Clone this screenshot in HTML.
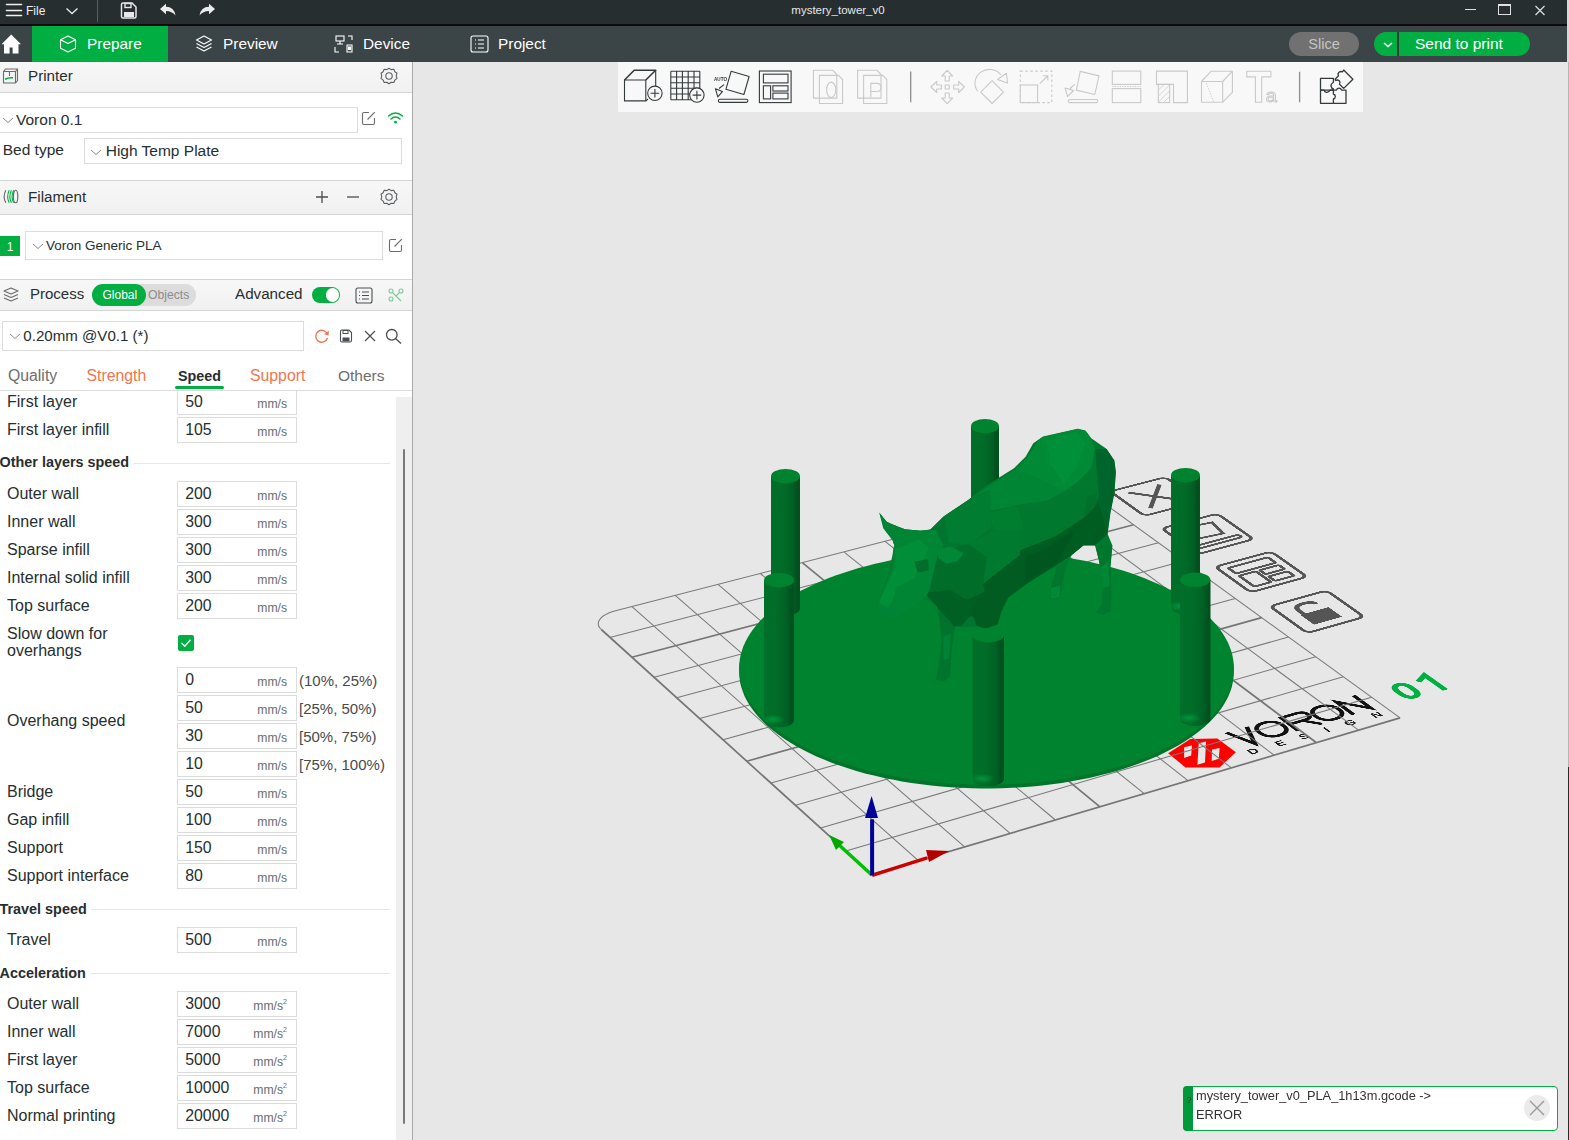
<!DOCTYPE html><html><head><meta charset="utf-8"><style>
html,body{margin:0;padding:0}
body{width:1569px;height:1140px;overflow:hidden;position:relative;background:#e7e7e7;font-family:"Liberation Sans",sans-serif}
.t{position:absolute;white-space:nowrap}
svg{overflow:visible}
</style></head><body><div style="position:absolute;left:413px;top:62px;width:1155px;height:1078px;background:#e7e7e7"></div><div style="position:absolute;left:0;top:0;width:1600px;height:1400px;transform-origin:0 0;transform:matrix3d(0.465738548,-0.08258816499,0,4.887388308e-05,0.1668468893,0.1443035326,0,-7.871619938e-05,0,0,1,0,523.377298,609.8387866,0,1)"><svg width="1600" height="1400" viewBox="0 0 1600 1400"><path d="M969.0 1176.0 L993.0 1242.0 L1017.0 1176.0" fill="none" stroke="#111" stroke-width="9.5" stroke-linejoin="miter"/><rect x="1026.0" y="1180.0" width="56.0" height="58.0" rx="26" ry="26" fill="none" stroke="#111" stroke-width="9.5" stroke-linejoin="miter"/><path d="M1096.0 1242.0 L1096.0 1180.0 L1132.0 1180.0 Q1150.0 1180.0 1150.0 1195.0 Q1150.0 1211.0 1132.0 1211.0 L1096.0 1211.0 M1126.0 1211.0 L1152.0 1242.0" fill="none" stroke="#111" stroke-width="9.5" stroke-linejoin="miter"/><rect x="1159.0" y="1180.0" width="56.0" height="58.0" rx="26" ry="26" fill="none" stroke="#111" stroke-width="9.5" stroke-linejoin="miter"/><path d="M1228.0 1242.0 L1228.0 1180.0 L1273.0 1238.0 L1273.0 1176.0" fill="none" stroke="#111" stroke-width="9.5" stroke-linejoin="miter"/><text x="973.0" y="1276.0" text-anchor="middle" font-family="Liberation Sans" font-size="30" font-weight="700" fill="#1a1a1a">D</text><text x="1037.0" y="1276.0" text-anchor="middle" font-family="Liberation Sans" font-size="30" font-weight="700" fill="#1a1a1a">E</text><text x="1093.0" y="1276.0" text-anchor="middle" font-family="Liberation Sans" font-size="30" font-weight="700" fill="#1a1a1a">S</text><text x="1147.0" y="1276.0" text-anchor="middle" font-family="Liberation Sans" font-size="30" font-weight="700" fill="#1a1a1a">I</text><text x="1203.0" y="1276.0" text-anchor="middle" font-family="Liberation Sans" font-size="30" font-weight="700" fill="#1a1a1a">G</text><text x="1267.0" y="1276.0" text-anchor="middle" font-family="Liberation Sans" font-size="30" font-weight="700" fill="#1a1a1a">N</text><rect x="1359.0" y="1184.0" width="33.0" height="58.0" rx="16" ry="22" fill="none" stroke="#00b043" stroke-width="13"/><path d="M1419.0 1194.0 L1446.0 1177.0 L1446.0 1250.0" fill="none" stroke="#00b043" stroke-width="13" stroke-linejoin="miter"/></svg></div><svg style="position:absolute;left:0;top:0" width="1569" height="1140" viewBox="0 0 1569 1140"><polygon points="1168.13,753.29 1190.34,738.94 1217.42,738.40 1235.84,752.21 1219.59,767.38 1185.46,767.38" fill="#ff0000"/><polygon points="1184.11,747.33 1191.96,745.44 1191.15,755.46 1184.11,757.90" fill="#e7e7e7"/><polygon points="1198.73,743.27 1206.05,741.38 1204.96,762.50 1197.38,764.67" fill="#e7e7e7"/><polygon points="1212.00,749.50 1219.59,747.88 1218.78,758.71 1211.73,760.88" fill="#e7e7e7"/></svg><svg style="position:absolute;left:0;top:0" width="1569" height="1140" viewBox="0 0 1569 1140"><path d="M918.4 860.6 L632.0 606.6 M845.9 851.0 L1371.5 697.2 M964.6 846.9 L675.2 595.4 M820.5 828.0 L1343.3 676.8 M1010.2 833.4 L718.0 584.4 M795.5 805.3 L1315.7 656.7 M1055.4 820.0 L760.3 573.5 M771.0 783.1 L1288.4 637.0 M1144.2 793.7 L843.9 551.9 M723.1 739.7 L1235.2 598.4 M1188.0 780.7 L885.0 541.3 M699.7 718.6 L1209.2 579.6 M1231.3 767.9 L925.8 530.8 M676.7 697.8 L1183.6 561.1 M1274.1 755.2 L966.2 520.3 M654.1 677.3 L1158.4 542.8 M1358.5 730.2 L1045.8 499.8 M609.9 637.4 L1109.2 507.1 M1400.1 717.9 L1085.1 489.6 M614.6 611.1 L1085.1 489.6 M601.3 629.5 L599.8 627.9 L598.8 626.3 L598.3 624.5 L598.3 622.8 L598.9 621.0 L599.9 619.3 L601.3 617.6 L603.2 616.0 L605.6 614.6 L608.3 613.2 L611.3 612.1 L614.6 611.1" stroke="#777a79" stroke-width="1.05" fill="none"/><path d="M871.8 874.4 L601.3 629.5 M871.8 874.4 L1400.1 717.9 M1100.0 806.8 L802.3 562.6 M746.8 761.2 L1261.6 617.6 M1316.5 742.7 L1006.2 510.0 M631.8 657.2 L1133.6 524.8" stroke="#747776" stroke-width="1.7" fill="none"/></svg><div style="position:absolute;left:0;top:0;width:1600px;height:1400px;transform-origin:0 0;transform:matrix3d(0.465738548,-0.08258816499,0,4.887388308e-05,0.1668468893,0.1443035326,0,-7.871619938e-05,0,0,1,0,523.377298,609.8387866,0,1)"><svg width="1600" height="1400" viewBox="0 0 1600 1400"><rect x="1343.0" y="135.0" width="142.0" height="140.0" rx="15" fill="none" stroke="#555" stroke-width="8"/><path d="M1374.0 160.0 L1454.0 250.0 M1454.0 160.0 L1374.0 250.0" stroke="#555" stroke-width="10" fill="none"/><rect x="1343.0" y="345.0" width="142.0" height="143.0" rx="15" fill="none" stroke="#555" stroke-width="8"/><g transform="translate(1414.0,417.0)"><path d="M-30 -50 L38 -42 L30 15 L-40 8 Z" fill="none" stroke="#555" stroke-width="8"/><rect x="-55" y="36" width="110" height="14" rx="7" fill="none" stroke="#555" stroke-width="8"/></g><rect x="1343.0" y="556.0" width="142.0" height="137.0" rx="15" fill="none" stroke="#555" stroke-width="8"/><g transform="translate(1414.0,625.0)"><rect x="-50" y="-50" width="100" height="30" rx="4" fill="none" stroke="#555" stroke-width="8"/><rect x="-50" y="-8" width="42" height="58" rx="4" fill="none" stroke="#555" stroke-width="8"/><rect x="2" y="-8" width="48" height="22" rx="4" fill="none" stroke="#555" stroke-width="8"/><rect x="2" y="26" width="48" height="24" rx="4" fill="none" stroke="#555" stroke-width="8"/></g><rect x="1343.0" y="766.0" width="142.0" height="139.0" rx="15" fill="none" stroke="#555" stroke-width="8"/><g transform="translate(1414.0,836.0)"><rect x="-38" y="-5" width="70" height="50" fill="#555"/><path d="M-30 -5 L-30 -22 Q-30 -45 -5 -45 Q18 -45 18 -30" fill="none" stroke="#555" stroke-width="11"/></g></svg></div><svg style="position:absolute;left:0;top:0" width="1569" height="1140" viewBox="0 0 1569 1140"><path d="M1194.8 609.6 L1189.6 605.9 L1184.0 602.3 L1178.2 598.8 L1172.1 595.4 L1165.8 592.1 L1159.2 588.9 L1152.3 585.9 L1145.3 583.0 L1138.0 580.2 L1130.5 577.6 L1122.8 575.1 L1114.9 572.7 L1106.8 570.5 L1098.6 568.5 L1090.2 566.6 L1081.7 564.8 L1073.1 563.2 L1064.3 561.7 L1055.5 560.4 L1046.5 559.3 L1037.5 558.3 L1028.4 557.5 L1019.2 556.8 L1010.0 556.3 L1000.8 556.0 L991.5 555.8 L982.2 555.8 L973.0 556.0 L963.7 556.3 L954.5 556.8 L945.4 557.4 L936.2 558.2 L927.2 559.2 L918.2 560.3 L909.4 561.6 L900.6 563.0 L891.9 564.6 L883.4 566.4 L875.0 568.3 L866.8 570.4 L858.7 572.6 L850.8 574.9 L843.1 577.4 L835.5 580.0 L828.2 582.8 L821.1 585.7 L814.3 588.7 L807.6 591.9 L801.2 595.1 L795.1 598.5 L789.3 602.0 L783.7 605.6 L778.4 609.3 L773.5 613.2 L768.8 617.1 L764.4 621.1 L760.4 625.1 L756.7 629.3 L753.3 633.5 L750.3 637.8 L747.6 642.2 L745.3 646.6 L743.3 651.0 L741.8 655.5 L740.5 660.1 L739.7 664.6 L739.2 669.2 L739.2 673.8 L739.5 678.4 L740.1 683.0 L741.2 687.6 L742.7 692.1 L744.5 696.7 L746.8 701.2 L749.4 705.7 L752.4 710.1 L755.8 714.5 L759.5 718.9 L763.6 723.1 L768.1 727.3 L773.0 731.4 L778.2 735.4 L783.8 739.3 L789.7 743.1 L795.9 746.9 L802.4 750.4 L809.3 753.9 L816.5 757.2 L823.9 760.4 L831.6 763.5 L839.6 766.4 L847.9 769.1 L856.4 771.7 L865.1 774.2 L874.0 776.4 L883.2 778.5 L892.5 780.4 L901.9 782.2 L911.6 783.7 L921.3 785.1 L931.2 786.2 L941.1 787.2 L951.2 788.0 L961.3 788.6 L971.4 789.0 L981.6 789.2 L991.8 789.2 L1002.0 789.0 L1012.1 788.6 L1022.2 788.0 L1032.3 787.2 L1042.2 786.2 L1052.1 785.0 L1061.8 783.7 L1071.4 782.1 L1080.9 780.4 L1090.2 778.5 L1099.3 776.4 L1108.2 774.1 L1116.9 771.7 L1125.4 769.1 L1133.6 766.3 L1141.6 763.4 L1149.3 760.4 L1156.7 757.2 L1163.9 753.9 L1170.7 750.4 L1177.3 746.8 L1183.5 743.1 L1189.3 739.3 L1194.9 735.4 L1200.1 731.4 L1204.9 727.3 L1209.4 723.1 L1213.5 718.9 L1217.3 714.6 L1220.6 710.2 L1223.6 705.7 L1226.2 701.3 L1228.5 696.8 L1230.3 692.2 L1231.8 687.7 L1232.8 683.1 L1233.5 678.5 L1233.8 673.9 L1233.8 669.3 L1233.3 664.8 L1232.5 660.2 L1231.3 655.7 L1229.7 651.2 L1227.8 646.8 L1225.5 642.4 L1222.8 638.0 L1219.8 633.7 L1216.5 629.5 L1212.8 625.4 L1208.8 621.3 L1204.4 617.3 L1199.8 613.4 Z" fill="#00742a" transform="translate(0,-0.8)"/><path d="M1194.8 609.6 L1189.6 605.9 L1184.0 602.3 L1178.2 598.8 L1172.1 595.4 L1165.8 592.1 L1159.2 588.9 L1152.3 585.9 L1145.3 583.0 L1138.0 580.2 L1130.5 577.6 L1122.8 575.1 L1114.9 572.7 L1106.8 570.5 L1098.6 568.5 L1090.2 566.6 L1081.7 564.8 L1073.1 563.2 L1064.3 561.7 L1055.5 560.4 L1046.5 559.3 L1037.5 558.3 L1028.4 557.5 L1019.2 556.8 L1010.0 556.3 L1000.8 556.0 L991.5 555.8 L982.2 555.8 L973.0 556.0 L963.7 556.3 L954.5 556.8 L945.4 557.4 L936.2 558.2 L927.2 559.2 L918.2 560.3 L909.4 561.6 L900.6 563.0 L891.9 564.6 L883.4 566.4 L875.0 568.3 L866.8 570.4 L858.7 572.6 L850.8 574.9 L843.1 577.4 L835.5 580.0 L828.2 582.8 L821.1 585.7 L814.3 588.7 L807.6 591.9 L801.2 595.1 L795.1 598.5 L789.3 602.0 L783.7 605.6 L778.4 609.3 L773.5 613.2 L768.8 617.1 L764.4 621.1 L760.4 625.1 L756.7 629.3 L753.3 633.5 L750.3 637.8 L747.6 642.2 L745.3 646.6 L743.3 651.0 L741.8 655.5 L740.5 660.1 L739.7 664.6 L739.2 669.2 L739.2 673.8 L739.5 678.4 L740.1 683.0 L741.2 687.6 L742.7 692.1 L744.5 696.7 L746.8 701.2 L749.4 705.7 L752.4 710.1 L755.8 714.5 L759.5 718.9 L763.6 723.1 L768.1 727.3 L773.0 731.4 L778.2 735.4 L783.8 739.3 L789.7 743.1 L795.9 746.9 L802.4 750.4 L809.3 753.9 L816.5 757.2 L823.9 760.4 L831.6 763.5 L839.6 766.4 L847.9 769.1 L856.4 771.7 L865.1 774.2 L874.0 776.4 L883.2 778.5 L892.5 780.4 L901.9 782.2 L911.6 783.7 L921.3 785.1 L931.2 786.2 L941.1 787.2 L951.2 788.0 L961.3 788.6 L971.4 789.0 L981.6 789.2 L991.8 789.2 L1002.0 789.0 L1012.1 788.6 L1022.2 788.0 L1032.3 787.2 L1042.2 786.2 L1052.1 785.0 L1061.8 783.7 L1071.4 782.1 L1080.9 780.4 L1090.2 778.5 L1099.3 776.4 L1108.2 774.1 L1116.9 771.7 L1125.4 769.1 L1133.6 766.3 L1141.6 763.4 L1149.3 760.4 L1156.7 757.2 L1163.9 753.9 L1170.7 750.4 L1177.3 746.8 L1183.5 743.1 L1189.3 739.3 L1194.9 735.4 L1200.1 731.4 L1204.9 727.3 L1209.4 723.1 L1213.5 718.9 L1217.3 714.6 L1220.6 710.2 L1223.6 705.7 L1226.2 701.3 L1228.5 696.8 L1230.3 692.2 L1231.8 687.7 L1232.8 683.1 L1233.5 678.5 L1233.8 673.9 L1233.8 669.3 L1233.3 664.8 L1232.5 660.2 L1231.3 655.7 L1229.7 651.2 L1227.8 646.8 L1225.5 642.4 L1222.8 638.0 L1219.8 633.7 L1216.5 629.5 L1212.8 625.4 L1208.8 621.3 L1204.4 617.3 L1199.8 613.4 Z" fill="#00832f" transform="translate(0,-4.5)"/><defs><linearGradient id="cg971" x1="0" x2="1" y1="0" y2="0"><stop offset="0" stop-color="#006f29"/><stop offset="0.45" stop-color="#006c28"/><stop offset="0.75" stop-color="#006025"/><stop offset="0.92" stop-color="#00501e"/><stop offset="1" stop-color="#00531f"/></linearGradient></defs><path d="M971.0 426.2 L971.0 555.5 A14.0 7.2 0 0 0 999.0 555.5 L999.0 426.2 Z" fill="url(#cg971)"/><ellipse cx="985.0" cy="426.2" rx="14.0" ry="7.2" fill="#00832f"/><defs><radialGradient id="gl971"><stop offset="0" stop-color="#00a040" stop-opacity="0.8"/><stop offset="1" stop-color="#00a040" stop-opacity="0"/></radialGradient></defs><ellipse cx="979.4" cy="554.5" rx="11.2" ry="5" fill="url(#gl971)"/><defs><linearGradient id="cg771" x1="0" x2="1" y1="0" y2="0"><stop offset="0" stop-color="#006f29"/><stop offset="0.45" stop-color="#006c28"/><stop offset="0.75" stop-color="#006025"/><stop offset="0.92" stop-color="#00501e"/><stop offset="1" stop-color="#00531f"/></linearGradient></defs><path d="M771.0 476.2 L771.0 608.3 A14.5 7.2 0 0 0 800.0 608.3 L800.0 476.2 Z" fill="url(#cg771)"/><ellipse cx="785.5" cy="476.2" rx="14.5" ry="7.2" fill="#00832f"/><defs><radialGradient id="gl771"><stop offset="0" stop-color="#00a040" stop-opacity="0.8"/><stop offset="1" stop-color="#00a040" stop-opacity="0"/></radialGradient></defs><ellipse cx="779.7" cy="607.3" rx="11.6" ry="5" fill="url(#gl771)"/><defs><linearGradient id="cg1171" x1="0" x2="1" y1="0" y2="0"><stop offset="0" stop-color="#006f29"/><stop offset="0.45" stop-color="#006c28"/><stop offset="0.75" stop-color="#006025"/><stop offset="0.92" stop-color="#00501e"/><stop offset="1" stop-color="#00531f"/></linearGradient></defs><path d="M1171.0 475.2 L1171.0 607.3 A14.5 7.2 0 0 0 1200.0 607.3 L1200.0 475.2 Z" fill="url(#cg1171)"/><ellipse cx="1185.5" cy="475.2" rx="14.5" ry="7.2" fill="#00832f"/><defs><radialGradient id="gl1171"><stop offset="0" stop-color="#00a040" stop-opacity="0.8"/><stop offset="1" stop-color="#00a040" stop-opacity="0"/></radialGradient></defs><ellipse cx="1179.7" cy="606.3" rx="11.6" ry="5" fill="url(#gl1171)"/><defs><clipPath id="cowclip"><polygon points="879.2,512.5 886.7,521.7 898.3,526.7 905.0,529.2 920.0,530.8 930.0,530.0 931.7,528.3 943.3,516.7 958.3,506.7 968.3,500.0 983.2,487.5 1014.0,468.2 1025.6,456.7 1033.3,443.2 1043.0,436.4 1077.7,428.7 1085.4,430.6 1091.2,438.3 1106.7,448.9 1114.4,460.5 1115.9,472.1 1114.4,493.3 1110.5,512.6 1107.6,533.9 1112.4,545.4 1110.5,566.7 1111.5,593.7 1110.5,611.0 1102.8,614.9 1096.0,613.0 1101.8,603.3 1102.8,584.0 1099.0,560.9 1095.1,545.4 1083.5,545.4 1071.9,555.1 1068.0,560.9 1064.2,574.4 1061.3,593.7 1058.4,599.5 1048.8,599.5 1050.7,589.8 1054.6,574.4 1056.5,566.7 1044.9,572.5 1023.7,586.0 1008.2,597.5 1001.5,611.0 997.6,624.6 985.1,628.4 977.4,626.0 966.0,627.0 955.0,626.7 951.7,650.0 950.0,676.7 943.3,681.7 935.8,679.2 938.3,666.7 941.7,641.7 940.0,622.0 936.7,606.2 925.1,598.5 911.7,606.7 900.0,615.0 894.2,619.2 885.0,618.3 877.5,611.7 876.7,604.2 881.7,593.3 888.3,575.0 892.5,555.0 894.2,545.0 892.5,540.0 883.3,528.3" fill="#000" /></clipPath></defs><polygon points="879.2,512.5 886.7,521.7 898.3,526.7 905.0,529.2 920.0,530.8 930.0,530.0 931.7,528.3 943.3,516.7 958.3,506.7 968.3,500.0 983.2,487.5 1014.0,468.2 1025.6,456.7 1033.3,443.2 1043.0,436.4 1077.7,428.7 1085.4,430.6 1091.2,438.3 1106.7,448.9 1114.4,460.5 1115.9,472.1 1114.4,493.3 1110.5,512.6 1107.6,533.9 1112.4,545.4 1110.5,566.7 1111.5,593.7 1110.5,611.0 1102.8,614.9 1096.0,613.0 1101.8,603.3 1102.8,584.0 1099.0,560.9 1095.1,545.4 1083.5,545.4 1071.9,555.1 1068.0,560.9 1064.2,574.4 1061.3,593.7 1058.4,599.5 1048.8,599.5 1050.7,589.8 1054.6,574.4 1056.5,566.7 1044.9,572.5 1023.7,586.0 1008.2,597.5 1001.5,611.0 997.6,624.6 985.1,628.4 977.4,626.0 966.0,627.0 955.0,626.7 951.7,650.0 950.0,676.7 943.3,681.7 935.8,679.2 938.3,666.7 941.7,641.7 940.0,622.0 936.7,606.2 925.1,598.5 911.7,606.7 900.0,615.0 894.2,619.2 885.0,618.3 877.5,611.7 876.7,604.2 881.7,593.3 888.3,575.0 892.5,555.0 894.2,545.0 892.5,540.0 883.3,528.3" fill="#007a2e" /><g clip-path="url(#cowclip)"><polygon points="960.0,504.9 987.0,487.5 1014.0,470.2 1027.5,456.7 1017.9,470.2 1037.2,477.9 1064.2,491.4 1046.8,501.0 1017.9,504.9 990.9,510.7 960.0,520.3" fill="#008535" /><polygon points="1027.5,456.7 1041.0,437.4 1077.7,428.7 1087.4,431.6 1095.1,448.9 1091.2,468.2 1075.8,483.7 1064.2,491.4 1037.2,477.9 1017.9,470.2" fill="#008a36" /><polygon points="1046.8,441.2 1075.8,431.6 1085.4,443.2 1075.8,468.2 1064.2,483.7 1050.7,464.4" fill="#009039" /><polygon points="960.0,520.3 990.9,510.7 1017.9,504.9 1046.8,501.0 1064.2,491.4 1075.8,483.7 1091.2,468.2 1095.1,448.9 1098.9,497.2 1085.4,516.5 1056.5,535.8 1008.2,555.1 960.0,582.1" fill="#00782d" /><polygon points="988.9,512.6 1017.9,506.8 1023.7,528.1 998.6,539.6" fill="#007e30" /><polygon points="1095.1,448.9 1106.7,448.9 1114.4,460.5 1115.9,472.1 1114.4,493.3 1110.5,512.6 1107.6,533.9 1095.1,543.5 1079.6,535.8 1085.4,516.5 1098.9,497.2" fill="#00652a" /><polygon points="1087.4,495.3 1097.0,493.3 1093.2,520.3 1081.6,528.1" fill="#00702b" /><polygon points="960.0,582.1 1008.2,555.1 1056.5,535.8 1085.4,516.5 1098.9,503.0 1107.6,533.9 1095.1,545.4 1083.5,545.4 1071.9,555.1 1044.9,572.5 1023.7,586.0 1008.2,597.5 1001.5,611.0 985.1,613.0 960.0,605.3" fill="#005d22" /><polygon points="998.6,568.6 1046.8,547.4 1075.8,530.0 1056.5,562.8 1017.9,586.0" fill="#00561f" /><polygon points="988.9,609.1 1001.5,611.0 997.6,624.6 985.1,628.4 977.4,620.7 971.6,611.0" fill="#006e29" /><polygon points="927.7,530.5 933.9,523.2 941.2,515.8 949.8,509.7 965.8,502.3 971.9,497.4 990.0,490.0 991.6,630.0 951.1,630.0 948.6,620.2 941.2,612.8 933.9,603.0 926.5,595.6 916.7,603.0 927.7,576.0 936.3,558.8 943.7,545.3 938.8,536.7" fill="#00752f" /><polygon points="925.3,563.7 991.6,553.9 991.6,612.8 948.6,620.2 941.2,612.8 933.9,603.0 926.5,595.6" fill="#006829" /><polygon points="929.0,591.9 974.4,583.3 991.6,598.1 991.6,612.8 956.0,619.0" fill="#005d22" /><polygon points="943.7,509.7 971.9,497.4 990.0,490.0 991.6,526.8 968.3,545.3 948.6,542.8" fill="#007d31" /><polygon points="879.2,512.1 889.7,523.8 901.9,526.2 916.7,528.7 927.7,530.5 938.8,536.7 943.7,545.3 936.3,558.8 927.7,576.0 916.7,603.0 903.2,612.8 894.6,619.0 886.0,619.0 877.4,611.6 876.1,605.5 879.8,598.1 888.4,578.4 893.3,563.7 892.7,549.0 883.5,526.8" fill="#008334" /><polygon points="894.6,546.5 916.7,530.5 933.9,539.1 927.7,558.8 909.3,563.7 895.8,558.8" fill="#008a37" /><polygon points="878.6,603.0 894.6,568.6 906.8,553.9 911.8,560.0 899.5,585.8 888.4,607.9" fill="#008f39" /><polygon points="916.7,563.7 926.5,560.6 930.2,568.6 919.1,571.7" fill="#006f2b" /><polygon points="938.8,549.0 956.0,547.1 964.6,553.9 954.7,560.6 946.1,563.7 938.8,556.3" fill="#008938" /><polygon points="928.9,557.0 967.5,543.5 986.8,557.0 984.9,591.7 967.5,599.5 928.9,591.7" fill="#006d29" /><polygon points="967.5,543.5 996.5,530.0 1020.0,530.0 1020.0,555.1 983.0,584.0 986.8,557.0" fill="#007a2e" /><polygon points="983.0,584.0 1020.0,555.1 1025.4,555.1 1025.4,603.3 1006.1,603.3 996.5,636.1 980.1,636.1 972.3,613.9 973.3,604.3 984.9,591.7" fill="#005c21" /><polygon points="925.1,592.7 950.2,589.8 973.3,604.3 971.4,614.9 961.7,625.5 954.0,626.5 936.7,606.2" fill="#005f23" /><polygon points="895.2,530.0 936.7,530.0 940.5,544.5 936.7,558.9 928.9,591.7 925.1,597.5 895.2,619.7" fill="#008535" /><polygon points="895.2,549.3 919.3,539.6 928.9,547.4 914.5,578.2 895.2,587.9" fill="#008f38" /><polygon points="914.5,561.8 928.0,558.9 928.9,570.5 917.4,572.4" fill="#006e2a" /><polygon points="937.6,549.3 950.2,546.4 963.7,553.2 957.9,560.9 946.3,563.8 938.6,558.0" fill="#008836" /><polygon points="938.8,612.8 949.8,620.2 953.5,630.0 938.8,630.0" fill="#00702b" /><polygon points="940.0,620.0 955.0,626.7 951.7,650.0 950.0,676.7 943.3,681.7 935.8,679.2 938.3,666.7 941.7,641.7" fill="#00732c" /><polygon points="943.3,636.7 950.8,633.3 949.2,658.3 943.3,660.0" fill="#008133" /><polygon points="1095.1,545.4 1112.5,545.4 1110.5,566.7 1111.5,593.7 1110.5,611.0 1102.8,614.9 1096.0,613.0 1101.8,603.3 1102.8,584.0 1098.9,560.9" fill="#00772d" /><polygon points="1099.9,568.6 1108.6,560.9 1109.0,586.0 1102.8,587.9" fill="#008735" /><polygon points="1056.5,566.7 1068.1,560.9 1064.2,574.4 1061.3,593.7 1058.4,599.5 1048.8,599.5 1050.7,589.8 1054.6,574.4" fill="#00772d" /><polygon points="1050.7,587.9 1060.3,586.0 1059.4,597.5 1050.7,598.5" fill="#008a37" /></g><defs><linearGradient id="cg764" x1="0" x2="1" y1="0" y2="0"><stop offset="0" stop-color="#006f29"/><stop offset="0.45" stop-color="#006c28"/><stop offset="0.75" stop-color="#006025"/><stop offset="0.92" stop-color="#00501e"/><stop offset="1" stop-color="#00531f"/></linearGradient></defs><path d="M764.0 580.2 L764.0 720.3 A15.0 7.2 0 0 0 794.0 720.3 L794.0 580.2 Z" fill="url(#cg764)"/><ellipse cx="779.0" cy="580.2" rx="15.0" ry="7.2" fill="#00832f"/><defs><radialGradient id="gl764"><stop offset="0" stop-color="#00a040" stop-opacity="0.8"/><stop offset="1" stop-color="#00a040" stop-opacity="0"/></radialGradient></defs><ellipse cx="773.0" cy="719.3" rx="12.0" ry="5" fill="url(#gl764)"/><defs><linearGradient id="cg1180" x1="0" x2="1" y1="0" y2="0"><stop offset="0" stop-color="#006f29"/><stop offset="0.45" stop-color="#006c28"/><stop offset="0.75" stop-color="#006025"/><stop offset="0.92" stop-color="#00501e"/><stop offset="1" stop-color="#00531f"/></linearGradient></defs><path d="M1180.0 579.8 L1180.0 719.0 A15.2 7.2 0 0 0 1210.5 719.0 L1210.5 579.8 Z" fill="url(#cg1180)"/><ellipse cx="1195.2" cy="579.8" rx="15.2" ry="7.2" fill="#00832f"/><defs><radialGradient id="gl1180"><stop offset="0" stop-color="#00a040" stop-opacity="0.8"/><stop offset="1" stop-color="#00a040" stop-opacity="0"/></radialGradient></defs><ellipse cx="1189.2" cy="718.0" rx="12.2" ry="5" fill="url(#gl1180)"/><defs><linearGradient id="cg972" x1="0" x2="1" y1="0" y2="0"><stop offset="0" stop-color="#006f29"/><stop offset="0.45" stop-color="#006c28"/><stop offset="0.75" stop-color="#006025"/><stop offset="0.92" stop-color="#00501e"/><stop offset="1" stop-color="#00531f"/></linearGradient></defs><path d="M972.5 635.2 L972.5 779.6 A15.8 7.2 0 0 0 1004.0 779.6 L1004.0 635.2 Z" fill="url(#cg972)"/><ellipse cx="988.2" cy="635.2" rx="15.8" ry="7.2" fill="#00832f"/><defs><radialGradient id="gl972"><stop offset="0" stop-color="#00a040" stop-opacity="0.8"/><stop offset="1" stop-color="#00a040" stop-opacity="0"/></radialGradient></defs><ellipse cx="982.0" cy="778.6" rx="12.6" ry="5" fill="url(#gl972)"/><path d="M872.1 875.3 L836.1 842.3" stroke="#00c000" stroke-width="3.5"/><polygon points="829.2,835.0 844.0,842.0 836.0,850.0" fill="#00a800" /><path d="M872.1 875.3 L927.1 857.8" stroke="#cc0000" stroke-width="3.5"/><polygon points="949.3,850.9 926.0,850.0 929.0,862.0" fill="#b00000" /><path d="M872.1 875.3 L872.1 819.3" stroke="#00009a" stroke-width="4"/><polygon points="871.6,796.0 865.0,818.0 878.0,818.0" fill="#00009a" /></svg><div style="position:absolute;left:0px;top:0px;width:1567px;height:24px;background:#262e30"></div><div style="position:absolute;left:0px;top:24px;width:1567px;height:2px;background:#0a0c0d"></div><svg style="position:absolute;left:5px;top:2px;" width="20" height="18" viewBox="0 0 20 18"><g stroke="#f0f0f0" stroke-width="1.6" stroke-linecap="round"><line x1="1.5" y1="2.5" x2="16.5" y2="2.5"/><line x1="1.5" y1="8.5" x2="16.5" y2="8.5"/><line x1="1.5" y1="13.5" x2="16.5" y2="13.5"/></g></svg><div class="t" style="left:26.0px;top:4.80px;font-size:12px;line-height:12px;color:#f0f0f0;font-weight:400;">File</div><svg style="position:absolute;left:64px;top:6px;" width="16" height="10" viewBox="0 0 16 10"><polyline points="2.5,2.5 8,7.5 13.5,2.5" fill="none" stroke="#e8e8e8" stroke-width="1.4"/></svg><div style="position:absolute;left:97px;top:0px;width:1px;height:22px;background:#5a6063"></div><svg style="position:absolute;left:120px;top:2px;" width="18" height="17" viewBox="0 0 18 17"><path d="M1.5 2.5 Q1.5 1 3 1 L12 1 L16 5 L16 14.5 Q16 16 14.5 16 L3 16 Q1.5 16 1.5 14.5 Z" fill="none" stroke="#e8e8e8" stroke-width="1.5"/><rect x="5" y="1.5" width="6" height="4" fill="none" stroke="#e8e8e8" stroke-width="1.4"/><rect x="4" y="10" width="10" height="5" fill="#e8e8e8"/></svg><svg style="position:absolute;left:159px;top:3px;" width="18" height="14" viewBox="0 0 18 14"><path d="M1 6 L7 0.8 L7 3.8 Q15 3.8 16.5 12.5 Q13 8 7 8 L7 11.2 Z" fill="#ececec"/></svg><svg style="position:absolute;left:198px;top:3px;" width="18" height="14" viewBox="0 0 18 14"><path d="M17 6 L11 0.8 L11 3.8 Q3 3.8 1.5 12.5 Q5 8 11 8 L11 11.2 Z" fill="#ececec"/></svg><div class="t" style="left:838.0px;top:5.03px;font-size:11.5px;line-height:11.5px;color:#e8e8e8;font-weight:400;transform:translateX(-50%)">mystery_tower_v0</div><div style="position:absolute;left:1465px;top:9px;width:11px;height:1px;background:#e0e0e0"></div><div style="position:absolute;left:1498px;top:4px;width:13px;height:11px;border:1.2px solid #e0e0e0;box-sizing:border-box;border-top-width:2px"></div><svg style="position:absolute;left:1534px;top:5px;" width="12" height="11" viewBox="0 0 12 11"><path d="M1.5 1 L10.5 10 M10.5 1 L1.5 10" stroke="#e0e0e0" stroke-width="1.2"/></svg><div style="position:absolute;left:1567px;top:0px;width:2px;height:62px;background:#d8d8d8"></div><div style="position:absolute;left:1568px;top:62px;width:1px;height:705px;background:#b5b5b5"></div><div style="position:absolute;left:1568px;top:767px;width:1px;height:373px;background:#2b2b2b"></div><div style="position:absolute;left:0px;top:26px;width:1567px;height:36px;background:#3b4446"></div><div style="position:absolute;left:32px;top:26px;width:136px;height:36px;background:#00ae42"></div><svg style="position:absolute;left:1px;top:33px;" width="21" height="22" viewBox="0 0 21 22"><path d="M10.2 1.5 L20 11.3 L17.5 11.3 L17.5 20.6 L11.6 20.6 L11.6 14.5 L8.6 14.5 L8.6 20.6 L3 20.6 L3 11.3 L0.6 11.3 Z" fill="#ffffff"/></svg><svg style="position:absolute;left:59px;top:35px;" width="18" height="18" viewBox="0 0 18 18"><g fill="none" stroke="#ffffff" stroke-width="1.1" stroke-linejoin="round"><path d="M9 1 L16.5 4.8 L16.5 13.2 L9 17 L1.5 13.2 L1.5 4.8 Z"/><path d="M1.5 4.8 L9 8.6 L16.5 4.8"/></g></svg><div class="t" style="left:87.0px;top:36.11px;font-size:15.4px;line-height:15.4px;color:#ffffff;font-weight:400;">Prepare</div><svg style="position:absolute;left:195px;top:35px;" width="18" height="18" viewBox="0 0 18 18"><g fill="none" stroke="#ffffff" stroke-width="1.1" stroke-linejoin="round"><path d="M9 1 L16.5 5 L9 9 L1.5 5 Z"/><path d="M1.5 8.5 L9 12.5 L16.5 8.5"/><path d="M1.5 12 L9 16 L16.5 12"/></g></svg><div class="t" style="left:223.0px;top:36.11px;font-size:15.4px;line-height:15.4px;color:#ffffff;font-weight:400;">Preview</div><svg style="position:absolute;left:334px;top:35px;" width="20" height="18" viewBox="0 0 20 18"><g fill="none" stroke="#ffffff" stroke-width="1.1"><rect x="2" y="1" width="8" height="5"/><path d="M6 6 V9 M3 9 H9"/><path d="M14 1 H18 V5 M1 12 V17 H5 M13 10 H18 V17 H13 Z"/><rect x="14.5" y="12" width="2" height="2.5"/></g></svg><div class="t" style="left:363.0px;top:36.11px;font-size:15.4px;line-height:15.4px;color:#ffffff;font-weight:400;">Device</div><svg style="position:absolute;left:470px;top:35px;" width="19" height="18" viewBox="0 0 19 18"><g fill="none" stroke="#ffffff" stroke-width="1.1"><rect x="1" y="1" width="17" height="16" rx="2"/><path d="M5 5 H6 M5 9 H6 M5 13 H6 M8 5 H14 M8 9 H14 M8 13 H14"/></g></svg><div class="t" style="left:498.0px;top:36.11px;font-size:15.4px;line-height:15.4px;color:#ffffff;font-weight:400;">Project</div><div style="position:absolute;left:1289px;top:32px;width:70px;height:24px;background:#717171;border-radius:12px"></div><div class="t" style="left:1324.0px;top:36.59px;font-size:14.6px;line-height:14.6px;color:#c4c4c4;font-weight:400;transform:translateX(-50%)">Slice</div><div style="position:absolute;left:1374px;top:32px;width:156px;height:24px;background:#00ae42;border-radius:12px"></div><div style="position:absolute;left:1397px;top:32px;width:2px;height:24px;background:#2f3b35"></div><svg style="position:absolute;left:1382px;top:41px;" width="12" height="8" viewBox="0 0 12 8"><polyline points="2,2 6,5.5 10,2" fill="none" stroke="#fff" stroke-width="1.4"/></svg><div class="t" style="left:1415.0px;top:35.83px;font-size:15.5px;line-height:15.5px;color:#ffffff;font-weight:400;">Send to print</div><div style="position:absolute;left:0px;top:62px;width:412px;height:1078px;background:#ffffff"></div><div style="position:absolute;left:412px;top:62px;width:1px;height:1078px;background:#a9a9a9"></div><div style="position:absolute;left:0px;top:62px;width:412px;height:31px;background:linear-gradient(#f7f7f7,#f1f1f1);border-bottom:1px solid #d4d4d4;box-sizing:border-box"></div><svg style="position:absolute;left:1px;top:68px;" width="18" height="16" viewBox="0 0 18 16"><path d="M2.5 3.5 L4.5 1 H16.5 V12.5 L14.5 15 H2.5 Z" fill="none" stroke="#6b6b6b" stroke-width="1.1"/><path d="M2.5 3.5 H14.5 V15 M14.5 3.5 L16.5 1" fill="none" stroke="#6b6b6b" stroke-width="1.1"/><path d="M8.5 3.5 V8" stroke="#6b6b6b" stroke-width="1.1"/><path d="M4 11.2 Q7 9.5 12 9.8" stroke="#00ae42" stroke-width="1.6" fill="none"/></svg><div class="t" style="left:28.0px;top:68.08px;font-size:15.2px;line-height:15.2px;color:#262e30;font-weight:400;">Printer</div><svg style="position:absolute;left:380px;top:67px;" width="18" height="18" viewBox="0 0 18 18"><path d="M9 1.2 L11.2 2.6 L13.8 2.3 L14.9 4.7 L17 6.2 L16.2 8.8 L17 11.4 L14.9 13.1 L13.8 15.5 L11.2 15.3 L9 16.8 L6.8 15.3 L4.2 15.5 L3.1 13.1 L1 11.4 L1.8 8.8 L1 6.2 L3.1 4.7 L4.2 2.3 L6.8 2.6 Z" fill="none" stroke="#5a5f61" stroke-width="1.1" stroke-linejoin="round"/><circle cx="9" cy="9" r="3.2" fill="none" stroke="#5a5f61" stroke-width="1.1"/></svg><div style="position:absolute;left:-2px;top:107px;width:360px;height:26px;border:1px solid #dcdcdc;box-sizing:border-box;background:#fff"></div><svg style="position:absolute;left:2px;top:117px;" width="12" height="7" viewBox="0 0 12 7"><polyline points="1,1 6.0,5.5 11.0,1" fill="none" stroke="#8a8a8a" stroke-width="1"/></svg><div class="t" style="left:16.0px;top:111.83px;font-size:15.5px;line-height:15.5px;color:#262e30;font-weight:400;">Voron 0.1</div><svg style="position:absolute;left:361px;top:111px;" width="16" height="15" viewBox="0 0 16 15"><path d="M8 1.5 H3 Q1.5 1.5 1.5 3 V12 Q1.5 13.5 3 13.5 H12 Q13.5 13.5 13.5 12 V7" fill="none" stroke="#6b6b6b" stroke-width="1.1"/><path d="M6.5 8.5 L13.8 1.2" stroke="#6b6b6b" stroke-width="1.1"/></svg><svg style="position:absolute;left:387px;top:111px;" width="17" height="14" viewBox="0 0 17 14"><g fill="none" stroke="#00ae42" stroke-width="1.5" stroke-linecap="round"><path d="M1.5 5 Q8.5 -1 15.5 5"/><path d="M4 8 Q8.5 4 13 8"/></g><circle cx="8.5" cy="11.2" r="1.4" fill="#00ae42"/></svg><div class="t" style="left:2.7px;top:141.82px;font-size:15.5px;line-height:15.5px;color:#262e30;font-weight:400;">Bed type</div><div style="position:absolute;left:84px;top:138px;width:318px;height:26px;border:1px solid #dcdcdc;box-sizing:border-box;background:#fff"></div><svg style="position:absolute;left:90px;top:149px;" width="12" height="7" viewBox="0 0 12 7"><polyline points="1,1 6.0,5.5 11.0,1" fill="none" stroke="#8a8a8a" stroke-width="1"/></svg><div class="t" style="left:105.7px;top:142.52px;font-size:15.5px;line-height:15.5px;color:#262e30;font-weight:400;">High Temp Plate</div><div style="position:absolute;left:0px;top:180px;width:412px;height:1px;background:#d4d4d4"></div><div style="position:absolute;left:0px;top:181px;width:412px;height:34px;background:linear-gradient(#f7f7f7,#f1f1f1);border-bottom:1px solid #d4d4d4;box-sizing:border-box"></div><svg style="position:absolute;left:2px;top:189px;" width="18" height="16" viewBox="0 0 18 16"><g fill="none" stroke-width="1.1"><path d="M3.8 1.2 Q0.6 7.5 3.8 13.8" stroke="#666"/><path d="M7.2 1.2 Q4.2 7.5 7.2 13.8" stroke="#00ae42"/><path d="M9.4 1.2 Q6.4 7.5 9.4 13.8" stroke="#00ae42"/><path d="M11.6 1.2 Q8.6 7.5 11.6 13.8" stroke="#00ae42"/><ellipse cx="13.6" cy="7.5" rx="2.2" ry="6.3" stroke="#666"/></g></svg><div class="t" style="left:28.0px;top:188.98px;font-size:15.2px;line-height:15.2px;color:#262e30;font-weight:400;">Filament</div><svg style="position:absolute;left:315px;top:190px;" width="14" height="14" viewBox="0 0 14 14"><path d="M7 1 V13 M1 7 H13" stroke="#4a4f51" stroke-width="1.3"/></svg><svg style="position:absolute;left:346px;top:190px;" width="14" height="14" viewBox="0 0 14 14"><path d="M1 7 H13" stroke="#4a4f51" stroke-width="1.3"/></svg><svg style="position:absolute;left:380px;top:188px;" width="18" height="18" viewBox="0 0 18 18"><path d="M9 1.2 L11.2 2.6 L13.8 2.3 L14.9 4.7 L17 6.2 L16.2 8.8 L17 11.4 L14.9 13.1 L13.8 15.5 L11.2 15.3 L9 16.8 L6.8 15.3 L4.2 15.5 L3.1 13.1 L1 11.4 L1.8 8.8 L1 6.2 L3.1 4.7 L4.2 2.3 L6.8 2.6 Z" fill="none" stroke="#5a5f61" stroke-width="1.1" stroke-linejoin="round"/><circle cx="9" cy="9" r="3.2" fill="none" stroke="#5a5f61" stroke-width="1.1"/></svg><div style="position:absolute;left:0px;top:236px;width:20px;height:20px;background:#00ae42"></div><div class="t" style="left:10.0px;top:240.80px;font-size:12px;line-height:12px;color:#ffffff;font-weight:400;transform:translateX(-50%)">1</div><div style="position:absolute;left:25px;top:231px;width:358px;height:29px;border:1px solid #dcdcdc;box-sizing:border-box;background:#fff"></div><svg style="position:absolute;left:32px;top:243px;" width="12" height="7" viewBox="0 0 12 7"><polyline points="1,1 6.0,5.5 11.0,1" fill="none" stroke="#8a8a8a" stroke-width="1"/></svg><div class="t" style="left:46.0px;top:239.12px;font-size:13.5px;line-height:13.5px;color:#262e30;font-weight:400;">Voron Generic PLA</div><svg style="position:absolute;left:388px;top:238px;" width="16" height="15" viewBox="0 0 16 15"><path d="M8 1.5 H3 Q1.5 1.5 1.5 3 V12 Q1.5 13.5 3 13.5 H12 Q13.5 13.5 13.5 12 V7" fill="none" stroke="#6b6b6b" stroke-width="1.1"/><path d="M6.5 8.5 L13.8 1.2" stroke="#6b6b6b" stroke-width="1.1"/></svg><div style="position:absolute;left:0px;top:279px;width:412px;height:1px;background:#d4d4d4"></div><div style="position:absolute;left:0px;top:280px;width:412px;height:31px;background:linear-gradient(#f7f7f7,#f1f1f1);border-bottom:1px solid #d4d4d4;box-sizing:border-box"></div><svg style="position:absolute;left:2px;top:287px;" width="18" height="16" viewBox="0 0 18 16"><g fill="none" stroke="#6b6b6b" stroke-width="1.1" stroke-linejoin="round"><path d="M2 4 L9 1 L16 4 L9 7 Z"/><path d="M2 7.5 L9 10.5 L16 7.5"/><path d="M2 11 L9 14 L16 11"/></g></svg><div class="t" style="left:30.0px;top:286.25px;font-size:15.0px;line-height:15.0px;color:#262e30;font-weight:400;">Process</div><div style="position:absolute;left:92px;top:284px;width:104px;height:22px;background:#dcdcdc;border-radius:11px"></div><div style="position:absolute;left:92px;top:284px;width:54px;height:22px;background:#00ae42;border-radius:11px"></div><div class="t" style="left:102.5px;top:288.80px;font-size:12px;line-height:12px;color:#ffffff;font-weight:400;">Global</div><div class="t" style="left:148.0px;top:288.63px;font-size:12.2px;line-height:12.2px;color:#8c8c8c;font-weight:400;">Objects</div><div class="t" style="left:235.0px;top:286.08px;font-size:15.2px;line-height:15.2px;color:#262e30;font-weight:400;">Advanced</div><div style="position:absolute;left:312px;top:287px;width:28px;height:16px;background:#00ae42;border-radius:8px"></div><div style="position:absolute;left:326px;top:288px;width:13px;height:14px;background:#ffffff;border-radius:7px"></div><svg style="position:absolute;left:355px;top:287px;" width="18" height="17" viewBox="0 0 18 17"><rect x="1" y="1" width="16" height="15" rx="2" fill="none" stroke="#4a4f51" stroke-width="1.1"/><path d="M4 5 H5 M4 8.5 H5 M4 12 H5 M7 5 H14 M7 8.5 H14 M7 12 H14" stroke="#4a4f51" stroke-width="1.1"/></svg><svg style="position:absolute;left:388px;top:288px;" width="16" height="14" viewBox="0 0 16 14"><g fill="none" stroke="#7fc99a" stroke-width="1.1"><circle cx="3" cy="3" r="2"/><circle cx="13" cy="3" r="2"/><circle cx="3" cy="11" r="2"/><path d="M5 5 L13 13 M11 5 L8 8"/></g></svg><div style="position:absolute;left:2px;top:321px;width:302px;height:30px;border:1px solid #dcdcdc;box-sizing:border-box;background:#fff"></div><svg style="position:absolute;left:9px;top:333px;" width="12" height="7" viewBox="0 0 12 7"><polyline points="1,1 6.0,5.5 11.0,1" fill="none" stroke="#8a8a8a" stroke-width="1"/></svg><div class="t" style="left:23.3px;top:328.17px;font-size:15.1px;line-height:15.1px;color:#262e30;font-weight:400;">0.20mm @V0.1 (*)</div><svg style="position:absolute;left:314px;top:329px;" width="16" height="14" viewBox="0 0 16 14"><path d="M13.5 5.5 A6 6 0 1 0 13.5 9" fill="none" stroke="#f2754e" stroke-width="1.4"/><path d="M14.8 1.8 L14.5 6.5 L10 5.2 Z" fill="#f2754e"/></svg><svg style="position:absolute;left:339px;top:329px;" width="14" height="14" viewBox="0 0 14 14"><path d="M1.5 2.5 Q1.5 1 3 1 L10 1 L12.5 3.5 L12.5 11.5 Q12.5 13 11 13 L3 13 Q1.5 13 1.5 11.5 Z" fill="none" stroke="#4a4f51" stroke-width="1.1"/><rect x="4" y="1.5" width="5" height="3" fill="none" stroke="#4a4f51" stroke-width="1"/><rect x="3.5" y="8.5" width="7" height="4" fill="#4a4f51"/></svg><svg style="position:absolute;left:364px;top:330px;" width="12" height="12" viewBox="0 0 12 12"><path d="M1 1 L11 11 M11 1 L1 11" stroke="#4a4f51" stroke-width="1.2"/></svg><svg style="position:absolute;left:385px;top:328px;" width="18" height="16" viewBox="0 0 18 16"><circle cx="6.8" cy="6.8" r="5.3" fill="none" stroke="#4a4f51" stroke-width="1.3"/><path d="M10.8 10.8 L16 15.5" stroke="#4a4f51" stroke-width="1.4"/></svg><div class="t" style="left:8.0px;top:367.67px;font-size:15.8px;line-height:15.8px;color:#6e6e6e;font-weight:400;">Quality</div><div class="t" style="left:86.5px;top:367.67px;font-size:15.8px;line-height:15.8px;color:#f2754e;font-weight:400;">Strength</div><div class="t" style="left:178.0px;top:368.95px;font-size:14.3px;line-height:14.3px;color:#262e30;font-weight:700;">Speed</div><div class="t" style="left:250.0px;top:367.67px;font-size:15.8px;line-height:15.8px;color:#f2754e;font-weight:400;">Support</div><div class="t" style="left:338.0px;top:367.93px;font-size:15.5px;line-height:15.5px;color:#6e6e6e;font-weight:400;">Others</div><div style="position:absolute;left:175px;top:386px;width:49px;height:3px;background:#00ae42;border-radius:2px"></div><div style="position:absolute;left:0px;top:390px;width:412px;height:1px;background:#dcdcdc"></div><div style="position:absolute;left:0;top:391px;width:396px;height:749px;overflow:hidden"><div style="position:absolute;left:177px;top:-2px;width:120px;height:26px;border:1px solid #dcdcdc;box-sizing:border-box;background:#fff"></div><div class="t" style="left:185.3px;top:2.57px;font-size:15.8px;line-height:15.8px;color:#262e30;font-weight:400;">50</div><div class="t" style="left:257.3px;top:6.63px;font-size:12.2px;line-height:12.2px;color:#6b6b6b;font-weight:400;">mm/s</div><div class="t" style="left:7.0px;top:3.00px;font-size:16px;line-height:16px;color:#262e30;font-weight:400;">First layer</div><div style="position:absolute;left:177px;top:26px;width:120px;height:26px;border:1px solid #dcdcdc;box-sizing:border-box;background:#fff"></div><div class="t" style="left:185.3px;top:30.57px;font-size:15.8px;line-height:15.8px;color:#262e30;font-weight:400;">105</div><div class="t" style="left:257.3px;top:34.63px;font-size:12.2px;line-height:12.2px;color:#6b6b6b;font-weight:400;">mm/s</div><div class="t" style="left:7.0px;top:31.00px;font-size:16px;line-height:16px;color:#262e30;font-weight:400;">First layer infill</div><div class="t" style="left:-0.5px;top:64.36px;font-size:14.4px;line-height:14.4px;color:#262e30;font-weight:700;">Other layers speed</div><div style="position:absolute;left:134px;top:71.60000000000002px;width:256px;height:1px;background:#e6e6e6"></div><div style="position:absolute;left:177px;top:90px;width:120px;height:26px;border:1px solid #dcdcdc;box-sizing:border-box;background:#fff"></div><div class="t" style="left:185.3px;top:94.57px;font-size:15.8px;line-height:15.8px;color:#262e30;font-weight:400;">200</div><div class="t" style="left:257.3px;top:98.63px;font-size:12.2px;line-height:12.2px;color:#6b6b6b;font-weight:400;">mm/s</div><div class="t" style="left:7.0px;top:95.00px;font-size:16px;line-height:16px;color:#262e30;font-weight:400;">Outer wall</div><div style="position:absolute;left:177px;top:118px;width:120px;height:26px;border:1px solid #dcdcdc;box-sizing:border-box;background:#fff"></div><div class="t" style="left:185.3px;top:122.57px;font-size:15.8px;line-height:15.8px;color:#262e30;font-weight:400;">300</div><div class="t" style="left:257.3px;top:126.63px;font-size:12.2px;line-height:12.2px;color:#6b6b6b;font-weight:400;">mm/s</div><div class="t" style="left:7.0px;top:123.00px;font-size:16px;line-height:16px;color:#262e30;font-weight:400;">Inner wall</div><div style="position:absolute;left:177px;top:146px;width:120px;height:26px;border:1px solid #dcdcdc;box-sizing:border-box;background:#fff"></div><div class="t" style="left:185.3px;top:150.57px;font-size:15.8px;line-height:15.8px;color:#262e30;font-weight:400;">300</div><div class="t" style="left:257.3px;top:154.63px;font-size:12.2px;line-height:12.2px;color:#6b6b6b;font-weight:400;">mm/s</div><div class="t" style="left:7.0px;top:151.00px;font-size:16px;line-height:16px;color:#262e30;font-weight:400;">Sparse infill</div><div style="position:absolute;left:177px;top:174px;width:120px;height:26px;border:1px solid #dcdcdc;box-sizing:border-box;background:#fff"></div><div class="t" style="left:185.3px;top:178.57px;font-size:15.8px;line-height:15.8px;color:#262e30;font-weight:400;">300</div><div class="t" style="left:257.3px;top:182.63px;font-size:12.2px;line-height:12.2px;color:#6b6b6b;font-weight:400;">mm/s</div><div class="t" style="left:7.0px;top:179.00px;font-size:16px;line-height:16px;color:#262e30;font-weight:400;">Internal solid infill</div><div style="position:absolute;left:177px;top:202px;width:120px;height:26px;border:1px solid #dcdcdc;box-sizing:border-box;background:#fff"></div><div class="t" style="left:185.3px;top:206.57px;font-size:15.8px;line-height:15.8px;color:#262e30;font-weight:400;">200</div><div class="t" style="left:257.3px;top:210.63px;font-size:12.2px;line-height:12.2px;color:#6b6b6b;font-weight:400;">mm/s</div><div class="t" style="left:7.0px;top:207.00px;font-size:16px;line-height:16px;color:#262e30;font-weight:400;">Top surface</div><div class="t" style="left:7.0px;top:234.60px;font-size:16px;line-height:16px;color:#262e30;font-weight:400;">Slow down for</div><div class="t" style="left:7.0px;top:252.20px;font-size:16px;line-height:16px;color:#262e30;font-weight:400;">overhangs</div><div style="position:absolute;left:178px;top:244px;width:16px;height:16px;background:#00ae42;border-radius:2px"></div><svg style="position:absolute;left:178px;top:244px;" width="16" height="16" viewBox="0 0 16 16"><polyline points="3.5,8 6.8,11.2 12.5,4.8" fill="none" stroke="#fff" stroke-width="1.4"/></svg><div style="position:absolute;left:177px;top:276px;width:120px;height:26px;border:1px solid #dcdcdc;box-sizing:border-box;background:#fff"></div><div class="t" style="left:185.3px;top:280.57px;font-size:15.8px;line-height:15.8px;color:#262e30;font-weight:400;">0</div><div class="t" style="left:257.3px;top:284.63px;font-size:12.2px;line-height:12.2px;color:#6b6b6b;font-weight:400;">mm/s</div><div class="t" style="left:299.0px;top:281.55px;font-size:15.0px;line-height:15.0px;color:#4a4a4a;font-weight:400;">(10%, 25%)</div><div style="position:absolute;left:177px;top:304px;width:120px;height:26px;border:1px solid #dcdcdc;box-sizing:border-box;background:#fff"></div><div class="t" style="left:185.3px;top:308.57px;font-size:15.8px;line-height:15.8px;color:#262e30;font-weight:400;">50</div><div class="t" style="left:257.3px;top:312.63px;font-size:12.2px;line-height:12.2px;color:#6b6b6b;font-weight:400;">mm/s</div><div class="t" style="left:299.0px;top:309.55px;font-size:15.0px;line-height:15.0px;color:#4a4a4a;font-weight:400;">[25%, 50%)</div><div style="position:absolute;left:177px;top:332px;width:120px;height:26px;border:1px solid #dcdcdc;box-sizing:border-box;background:#fff"></div><div class="t" style="left:185.3px;top:336.57px;font-size:15.8px;line-height:15.8px;color:#262e30;font-weight:400;">30</div><div class="t" style="left:257.3px;top:340.63px;font-size:12.2px;line-height:12.2px;color:#6b6b6b;font-weight:400;">mm/s</div><div class="t" style="left:299.0px;top:337.55px;font-size:15.0px;line-height:15.0px;color:#4a4a4a;font-weight:400;">[50%, 75%)</div><div style="position:absolute;left:177px;top:360px;width:120px;height:26px;border:1px solid #dcdcdc;box-sizing:border-box;background:#fff"></div><div class="t" style="left:185.3px;top:364.57px;font-size:15.8px;line-height:15.8px;color:#262e30;font-weight:400;">10</div><div class="t" style="left:257.3px;top:368.63px;font-size:12.2px;line-height:12.2px;color:#6b6b6b;font-weight:400;">mm/s</div><div class="t" style="left:299.0px;top:365.55px;font-size:15.0px;line-height:15.0px;color:#4a4a4a;font-weight:400;">[75%, 100%)</div><div class="t" style="left:7.0px;top:322.40px;font-size:16px;line-height:16px;color:#262e30;font-weight:400;">Overhang speed</div><div style="position:absolute;left:177px;top:388px;width:120px;height:26px;border:1px solid #dcdcdc;box-sizing:border-box;background:#fff"></div><div class="t" style="left:185.3px;top:392.57px;font-size:15.8px;line-height:15.8px;color:#262e30;font-weight:400;">50</div><div class="t" style="left:257.3px;top:396.63px;font-size:12.2px;line-height:12.2px;color:#6b6b6b;font-weight:400;">mm/s</div><div class="t" style="left:7.0px;top:393.00px;font-size:16px;line-height:16px;color:#262e30;font-weight:400;">Bridge</div><div style="position:absolute;left:177px;top:416px;width:120px;height:26px;border:1px solid #dcdcdc;box-sizing:border-box;background:#fff"></div><div class="t" style="left:185.3px;top:420.57px;font-size:15.8px;line-height:15.8px;color:#262e30;font-weight:400;">100</div><div class="t" style="left:257.3px;top:424.63px;font-size:12.2px;line-height:12.2px;color:#6b6b6b;font-weight:400;">mm/s</div><div class="t" style="left:7.0px;top:421.00px;font-size:16px;line-height:16px;color:#262e30;font-weight:400;">Gap infill</div><div style="position:absolute;left:177px;top:444px;width:120px;height:26px;border:1px solid #dcdcdc;box-sizing:border-box;background:#fff"></div><div class="t" style="left:185.3px;top:448.57px;font-size:15.8px;line-height:15.8px;color:#262e30;font-weight:400;">150</div><div class="t" style="left:257.3px;top:452.63px;font-size:12.2px;line-height:12.2px;color:#6b6b6b;font-weight:400;">mm/s</div><div class="t" style="left:7.0px;top:449.00px;font-size:16px;line-height:16px;color:#262e30;font-weight:400;">Support</div><div style="position:absolute;left:177px;top:472px;width:120px;height:26px;border:1px solid #dcdcdc;box-sizing:border-box;background:#fff"></div><div class="t" style="left:185.3px;top:476.57px;font-size:15.8px;line-height:15.8px;color:#262e30;font-weight:400;">80</div><div class="t" style="left:257.3px;top:480.63px;font-size:12.2px;line-height:12.2px;color:#6b6b6b;font-weight:400;">mm/s</div><div class="t" style="left:7.0px;top:477.00px;font-size:16px;line-height:16px;color:#262e30;font-weight:400;">Support interface</div><div class="t" style="left:-0.5px;top:510.76px;font-size:14.4px;line-height:14.4px;color:#262e30;font-weight:700;">Travel speed</div><div style="position:absolute;left:90.5px;top:518px;width:299.5px;height:1px;background:#e6e6e6"></div><div style="position:absolute;left:177px;top:536px;width:120px;height:26px;border:1px solid #dcdcdc;box-sizing:border-box;background:#fff"></div><div class="t" style="left:185.3px;top:540.57px;font-size:15.8px;line-height:15.8px;color:#262e30;font-weight:400;">500</div><div class="t" style="left:257.3px;top:544.63px;font-size:12.2px;line-height:12.2px;color:#6b6b6b;font-weight:400;">mm/s</div><div class="t" style="left:7.0px;top:541.00px;font-size:16px;line-height:16px;color:#262e30;font-weight:400;">Travel</div><div class="t" style="left:-0.5px;top:574.56px;font-size:14.4px;line-height:14.4px;color:#262e30;font-weight:700;">Acceleration</div><div style="position:absolute;left:91px;top:581.8px;width:299px;height:1px;background:#e6e6e6"></div><div style="position:absolute;left:177px;top:600px;width:120px;height:26px;border:1px solid #dcdcdc;box-sizing:border-box;background:#fff"></div><div class="t" style="left:185.3px;top:604.57px;font-size:15.8px;line-height:15.8px;color:#262e30;font-weight:400;">3000</div><div class="t" style="left:253.3px;top:608.63px;font-size:12.2px;line-height:12.2px;color:#6b6b6b;font-weight:400;">mm/s<span style="font-size:7px;position:relative;top:-6px">2</span></div><div class="t" style="left:7.0px;top:605.00px;font-size:16px;line-height:16px;color:#262e30;font-weight:400;">Outer wall</div><div style="position:absolute;left:177px;top:628px;width:120px;height:26px;border:1px solid #dcdcdc;box-sizing:border-box;background:#fff"></div><div class="t" style="left:185.3px;top:632.57px;font-size:15.8px;line-height:15.8px;color:#262e30;font-weight:400;">7000</div><div class="t" style="left:253.3px;top:636.63px;font-size:12.2px;line-height:12.2px;color:#6b6b6b;font-weight:400;">mm/s<span style="font-size:7px;position:relative;top:-6px">2</span></div><div class="t" style="left:7.0px;top:633.00px;font-size:16px;line-height:16px;color:#262e30;font-weight:400;">Inner wall</div><div style="position:absolute;left:177px;top:656px;width:120px;height:26px;border:1px solid #dcdcdc;box-sizing:border-box;background:#fff"></div><div class="t" style="left:185.3px;top:660.57px;font-size:15.8px;line-height:15.8px;color:#262e30;font-weight:400;">5000</div><div class="t" style="left:253.3px;top:664.63px;font-size:12.2px;line-height:12.2px;color:#6b6b6b;font-weight:400;">mm/s<span style="font-size:7px;position:relative;top:-6px">2</span></div><div class="t" style="left:7.0px;top:661.00px;font-size:16px;line-height:16px;color:#262e30;font-weight:400;">First layer</div><div style="position:absolute;left:177px;top:684px;width:120px;height:26px;border:1px solid #dcdcdc;box-sizing:border-box;background:#fff"></div><div class="t" style="left:185.3px;top:688.57px;font-size:15.8px;line-height:15.8px;color:#262e30;font-weight:400;">10000</div><div class="t" style="left:253.3px;top:692.63px;font-size:12.2px;line-height:12.2px;color:#6b6b6b;font-weight:400;">mm/s<span style="font-size:7px;position:relative;top:-6px">2</span></div><div class="t" style="left:7.0px;top:689.00px;font-size:16px;line-height:16px;color:#262e30;font-weight:400;">Top surface</div><div style="position:absolute;left:177px;top:712px;width:120px;height:26px;border:1px solid #dcdcdc;box-sizing:border-box;background:#fff"></div><div class="t" style="left:185.3px;top:716.57px;font-size:15.8px;line-height:15.8px;color:#262e30;font-weight:400;">20000</div><div class="t" style="left:253.3px;top:720.63px;font-size:12.2px;line-height:12.2px;color:#6b6b6b;font-weight:400;">mm/s<span style="font-size:7px;position:relative;top:-6px">2</span></div><div class="t" style="left:7.0px;top:717.00px;font-size:16px;line-height:16px;color:#262e30;font-weight:400;">Normal printing</div></div><div style="position:absolute;left:396px;top:397px;width:16px;height:743px;background:#efefef"></div><div style="position:absolute;left:403px;top:449px;width:2.3px;height:675px;background:#7a7a7a;border-radius:1px"></div><div style="position:absolute;left:618px;top:62px;width:745px;height:50px;background:#f8f8f8"></div><svg style="position:absolute;left:0;top:0" width="1569" height="140" viewBox="0 0 1569 140"><g stroke="#333a3c" stroke-width="1.1" fill="none" stroke-linejoin="round"><rect x="624.5" y="80" width="21.3" height="20.9"/><path d="M624.5 80 L634.2 70.2 L655.7 70.2 L645.8 80" stroke-width="1.6"/><path d="M655.7 70.2 V86.3 M645.8 100.9 L648 99"/><circle cx="654.9" cy="93.3" r="7.2" fill="#f8f8f8"/><path d="M650.6 93.3 H659.2 M654.9 89 V97.6"/></g><g stroke="#333a3c" stroke-width="1.1" fill="none"><path d="M670.8 71.3 V99.7 M676.6 71.3 V99.7 M682.4 71.3 V99.7 M688.2 71.3 V99.7 M694.0 71.3 V99.7 M699.8 71.3 V99.7 M670.8 71.3 H699.8 M670.8 77.0 H699.8 M670.8 82.7 H699.8 M670.8 88.3 H699.8 M670.8 94.0 H699.8 M670.8 99.7 H699.8"/><circle cx="696.9" cy="95.1" r="7.2" fill="#f8f8f8"/><path d="M692.6 95.1 H701.2 M696.9 90.8 V99.4"/></g><g stroke="#333a3c" stroke-width="1.1" fill="none" stroke-linejoin="round"><path d="M731.1 71.3 L749.1 76.5 L743.9 94.5 L725.9 89.3 Z"/><path d="M724.1 84.6 L719 88.5"/><path d="M715.4 88.7 L722.4 91.6 L717.8 96.8 Z"/><rect x="718.3" y="99.2" width="29.6" height="3.2" rx="1.6"/></g><text x="714" y="81.3" font-family="Liberation Sans" font-size="6.2" font-weight="700" fill="#333a3c" textLength="13" lengthAdjust="spacingAndGlyphs">AUTO</text><g stroke="#333a3c" stroke-width="1.1" fill="none"><rect x="759.4" y="71" width="31.7" height="31.6"/><rect x="763.4" y="74.2" width="24.6" height="8.7"/><rect x="763.4" y="85.8" width="7.2" height="13.1"/><rect x="772.9" y="85.8" width="15.1" height="5.2"/><rect x="772.9" y="93.1" width="15.1" height="5.8"/></g><g stroke="#c9c9c9" stroke-width="1.1" fill="none" fill="#f8f8f8" transform="translate(0,0)"><path d="M813.4 70.3 H832.8 L836.8 74.5 V98.1 H813.4 Z"/><path d="M819.4 75.4 H838.5 L842.6 79.5 V103.5 H819.4 Z"/></g><g stroke="#c9c9c9" stroke-width="1.1" fill="none" fill="#f8f8f8" transform="translate(44.2,0)"><path d="M813.4 70.3 H832.8 L836.8 74.5 V98.1 H813.4 Z"/><path d="M819.4 75.4 H838.5 L842.6 79.5 V103.5 H819.4 Z"/></g><ellipse cx="831.2" cy="89.8" rx="4.6" ry="7.7" stroke="#c9c9c9" stroke-width="1.1" fill="none"/><path d="M870.8 97.5 V83.4 H877 Q881 83.4 881 87.5 Q881 91.5 877 91.5 H870.8" stroke="#c9c9c9" stroke-width="1.1" fill="none"/><path d="M910.7 71.4 V102.2 M1299.6 71.8 V102.2" stroke="#8e8e8e" stroke-width="1.3"/><g stroke="#c9c9c9" stroke-width="1.1" fill="none" stroke-linejoin="round" transform="translate(947.2,87)"><path d="M0 -16.6 L5.5 -11 L2 -11 L2 -6 L-2 -6 L-2 -11 L-5.5 -11 Z"/><path d="M0 16.6 L5.5 11 L2 11 L2 6 L-2 6 L-2 11 L-5.5 11 Z"/><path d="M-16.3 0 L-10.5 -5.5 L-10.5 -2 L-5.8 -2 L-5.8 2 L-10.5 2 L-10.5 5.5 Z"/><path d="M17.2 0 L11.5 -5.5 L11.5 -2 L6.5 -2 L6.5 2 L11.5 2 L11.5 5.5 Z"/><rect x="-2" y="-2" width="4" height="4"/></g><g stroke="#c9c9c9" stroke-width="1.1" fill="none" stroke-linejoin="round"><path d="M977.8 91.5 A13 12.5 0 0 1 1001 75"/><path d="M997.5 79.5 L1006.5 73.3 L1007.5 83 Z"/><path d="M992.1 80.7 L1003.5 92.1 L992.1 103.5 L980.7 92.1 Z"/></g><g stroke="#c9c9c9" stroke-width="1.1" fill="none"><rect x="1020.3" y="71.1" width="31.5" height="31.5" stroke-dasharray="2.5 2.5"/><rect x="1020.3" y="85" width="17.3" height="17.6" fill="#f8f8f8" stroke-dasharray="none"/><path d="M1039.7 83.8 L1047.5 76 M1043 75.8 H1047.8 V80.6"/></g><g stroke="#c9c9c9" stroke-width="1.1" fill="none" stroke-linejoin="round"><path d="M1080.2 71.4 L1099 75.9 L1094.8 94.5 L1076.4 90.1 Z"/><path d="M1074.8 84.4 Q1071 86.5 1069.5 90"/><path d="M1065.1 88 L1073.6 90.5 L1067.5 96.5 Z"/><rect x="1068.1" y="99.5" width="29.7" height="3.1" rx="1.5"/></g><g stroke="#c9c9c9" stroke-width="1.1" fill="none"><rect x="1112.3" y="71.1" width="28.5" height="13.3"/><rect x="1112.3" y="88.6" width="28.5" height="14"/><path d="M1112.3 86.5 H1140.8" stroke-dasharray="1.2 1.3"/></g><g stroke="#c9c9c9" stroke-width="1.1" fill="none"><path d="M1156.5 71.1 H1187.4 V102.6 H1173.5 V84.4 H1156.5 Z"/><rect x="1158.3" y="84.4" width="11.3" height="18.2"/><path d="M1158.5 90 L1164 84.5 M1158.5 96 L1169.5 85 M1158.5 102 L1169.5 91 M1163.5 102.5 L1169.5 96.5" stroke-width="0.8"/></g><g stroke="#c9c9c9" stroke-width="1.1" fill="none" stroke-linejoin="round"><rect x="1201.5" y="81.5" width="21.2" height="20.7"/><path d="M1201.5 81.5 L1211.2 71.2 H1232.4 L1222.7 81.5 M1232.4 71.2 V92.4 L1222.7 102.2"/><path d="M1206.5 83.5 L1213.5 101.5" stroke-dasharray="1 1.6"/></g><g stroke="#c9c9c9" stroke-width="1.1" fill="none" stroke-linejoin="round"><path d="M1246.8 71.2 H1270.9 V76.9 H1261.7 V102.2 H1255.4 V76.9 H1246.8 Z"/></g><text x="1265.5" y="102.3" font-family="Liberation Sans" font-size="19" fill="none" stroke="#c9c9c9" stroke-width="1" textLength="11.5" lengthAdjust="spacingAndGlyphs">a</text><g stroke="#333a3c" stroke-width="1.3" fill="none" stroke-linejoin="round"><path d="M1320.5 78.3 H1333.4 V82.5 Q1330.8 83.5 1331 86 Q1331.5 88.5 1333.4 89 V90.2 H1320.5 Z"/><path d="M1320.5 90.2 H1324 Q1325 92.5 1327 92.3 Q1329.5 92 1330 90.2 H1333.4 V94 Q1335.3 94.5 1335.3 96.5 Q1335.3 98.5 1333.4 99 V103.3 H1320.5 Z"/><path d="M1333.4 90.2 H1336.5 Q1337 88.2 1339 88.2 Q1341 88.2 1341.5 90.2 H1346 V103.3 H1333.4"/><path d="M1343.7 70 L1352.9 79.2 L1343.7 88.4 L1339.5 84.2 Q1340.8 82.2 1339.3 80.7 Q1337.5 79.4 1335.7 80.5 L1335.1 79.2 L1338.5 75.8 Q1337.3 73.5 1339 72.2 Q1340.8 71 1342.5 71.8 Z"/></g></svg><div style="position:absolute;left:1183px;top:1086px;width:375px;height:45px;background:#ffffff;border:1px solid #00ae42;border-radius:4px;box-sizing:border-box"></div><div style="position:absolute;left:1183px;top:1086px;width:10px;height:45px;background:#009a3a;border-radius:4px 0 0 4px"></div><div class="t" style="left:1186.5px;top:1096.35px;font-size:9px;line-height:9px;color:#333333;font-weight:400;">?</div><div class="t" style="left:1196.0px;top:1089.92px;font-size:12.8px;line-height:12.8px;color:#333333;font-weight:400;">mystery_tower_v0_PLA_1h13m.gcode -&gt;</div><div class="t" style="left:1196.0px;top:1108.92px;font-size:12.8px;line-height:12.8px;color:#333333;font-weight:400;">ERROR</div><div style="position:absolute;left:1524px;top:1095px;width:26px;height:26px;background:#ebebeb;border-radius:13px"></div><svg style="position:absolute;left:1529px;top:1100px;" width="16" height="16" viewBox="0 0 16 16"><path d="M1 1 L15 15 M15 1 L1 15" stroke="#9a9a9a" stroke-width="1.4"/></svg></body></html>
